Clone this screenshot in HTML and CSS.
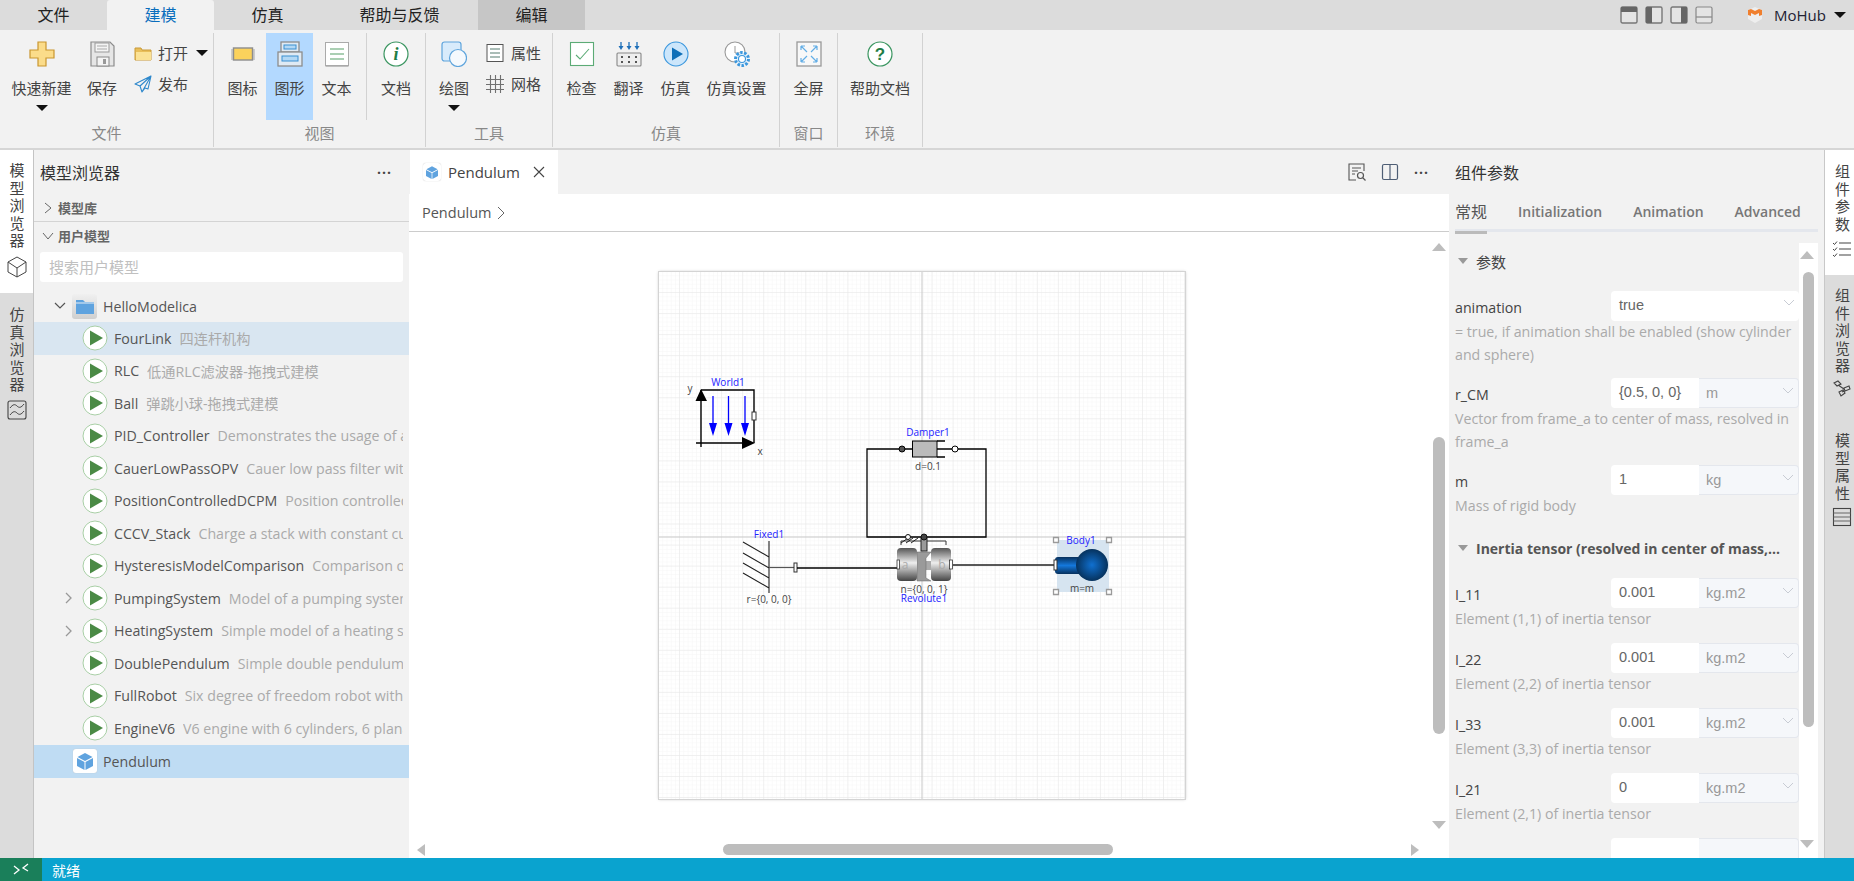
FILE: index.html
```html
<!DOCTYPE html>
<html lang="zh">
<head>
<meta charset="utf-8">
<title>MoHub</title>
<link rel="stylesheet" href="styles.css">
</head>
<body>
<svg class="defs" width="0" height="0" aria-hidden="true">
  <defs>
    <symbol id="play" viewBox="0 0 26 26"><circle cx="13" cy="13" r="12" fill="#fff" stroke="#a9cfa6" stroke-width="1"/><path d="M8 5.5 21 13 8 20.5Z" fill="#4a8a45"/></symbol>
    <linearGradient id="cyl" x1="0" y1="0" x2="0" y2="1"><stop offset="0" stop-color="#555"/><stop offset=".45" stop-color="#eee"/><stop offset="1" stop-color="#444"/></linearGradient>
    <linearGradient id="bodyc" x1="0" y1="0" x2="0" y2="1"><stop offset="0" stop-color="#06305c"/><stop offset=".5" stop-color="#1478dc"/><stop offset="1" stop-color="#06305c"/></linearGradient>
    <radialGradient id="bodys" cx=".5" cy=".5" r=".55"><stop offset="0" stop-color="#1070d0"/><stop offset="1" stop-color="#052c52"/></radialGradient>
    <pattern id="minor" x="659" y="272" width="4.208" height="4.208" patternUnits="userSpaceOnUse"><path d="M4.208 0V4.208H0" fill="none" stroke="#f5f5f5" stroke-width="1"/></pattern>
    <pattern id="major" x="659" y="272" width="21.04" height="21.04" patternUnits="userSpaceOnUse"><path d="M21.04 0V21.04H0" fill="none" stroke="#e6e6e6" stroke-width="1"/></pattern>
  </defs>
</svg>
<div class="app">
  <header class="menubar">
    <nav class="menutabs">
      <div class="menutab">文件</div>
      <div class="menutab active">建模</div>
      <div class="menutab">仿真</div>
      <div class="menutab">帮助与反馈</div>
      <div class="menutab context">编辑</div>
    </nav>
    <div class="menuright">
      <svg class="layout" width="18" height="18" viewBox="0 0 18 18"><rect x="1" y="1" width="16" height="16" rx="1.5" fill="#e4e4e4" stroke="#777" stroke-width="1.4"/><rect x="1" y="1" width="16" height="5" fill="#666"/></svg>
      <svg class="layout" width="18" height="18" viewBox="0 0 18 18"><rect x="1" y="1" width="16" height="16" rx="1.5" fill="#e4e4e4" stroke="#777" stroke-width="1.4"/><rect x="1" y="1" width="6" height="16" fill="#666"/></svg>
      <svg class="layout" width="18" height="18" viewBox="0 0 18 18"><rect x="1" y="1" width="16" height="16" rx="1.5" fill="#e4e4e4" stroke="#777" stroke-width="1.4"/><rect x="11" y="1" width="6" height="16" fill="#666"/></svg>
      <svg class="layout" width="18" height="18" viewBox="0 0 18 18"><rect x="1" y="1" width="16" height="16" rx="1.5" fill="#e4e4e4" stroke="#888" stroke-width="1.2"/><path d="M1 11H17" stroke="#888" stroke-width="1.2"/></svg>
      <svg class="logo" width="16" height="18" viewBox="0 0 16 18"><path d="M1 4 8 1l7 3v9l-7 4-7-4Z" fill="#eee"/><path d="M1 4 4 3 8 5l4-2 3 1v5l-3 1V7L8 9 4 7v3L1 9Z" fill="#f07f2e"/></svg>
      <span class="user">MoHub</span>
      <span class="caret"></span>
    </div>
  </header>

  <section class="ribbon">
    <div class="group g-file">
      <div class="group-body">
        <div class="rbtn w69">
          <svg width="26" height="26" viewBox="0 0 26 26"><path d="M9 1h8v8h8v8h-8v8H9v-8H1V9h8Z" fill="#fbdc8a" stroke="#c9962f" stroke-width="1.2"/></svg>
          <span>快速新建</span><i class="caret"></i>
        </div>
        <div class="rbtn w52">
          <svg width="26" height="26" viewBox="0 0 26 26"><path d="M2 1h19l4 4v20H2Z" fill="#e6e6e6" stroke="#8c8c8c" stroke-width="1.2"/><rect x="6" y="2" width="14" height="9" fill="#f4f4f4" stroke="#999"/><path d="M8 5h10M8 8h10" stroke="#aaa"/><rect x="8" y="16" width="12" height="9" fill="#f4f4f4" stroke="#888"/><rect x="14" y="18" width="3" height="5" fill="#999"/></svg>
          <span>保存</span>
        </div>
        <div class="rcol">
          <div class="rsmall wide">
            <svg width="18" height="18" viewBox="0 0 18 18"><path d="M1 4h6l1 2h9v10H1Z" fill="#e9bf5a" stroke="#c99a38"/><path d="M2 8h15v8H2Z" fill="#fbe295"/></svg>
            <span>打开</span><i class="caret"></i>
          </div>
          <div class="rsmall">
            <svg width="18" height="18" viewBox="0 0 18 18"><path d="M17 1 1 9l5 2 2 6 3-4 3 1ZM17 1 6 11M17 1 8 17" fill="none" stroke="#2e88cc" stroke-width="1.1" stroke-linejoin="round"/></svg>
            <span>发布</span>
          </div>
        </div>
      </div>
      <div class="group-label">文件</div>
    </div>

    <div class="group g-view">
      <div class="group-body">
        <div class="rbtn w47">
          <svg width="26" height="26" viewBox="0 0 26 26"><rect x="1" y="8" width="24" height="11" fill="#ccc"/><rect x="3.5" y="7" width="19" height="12" fill="#fbd25c" stroke="#8d8d8d" stroke-width="1.4"/></svg>
          <span>图标</span>
        </div>
        <div class="rbtn w47 selected">
          <svg width="26" height="26" viewBox="0 0 26 26"><rect x="4" y="1" width="18" height="10" fill="#dfeaf4" stroke="#8d8d8d" stroke-width="1.3"/><rect x="7" y="4" width="12" height="4" fill="#b2d8f5" stroke="#3a8fd0"/><rect x="1" y="11" width="24" height="14" fill="#dfeaf4" stroke="#8d8d8d" stroke-width="1.3"/><rect x="5" y="15" width="16" height="5" fill="#b2d8f5" stroke="#3a8fd0"/></svg>
          <span>图形</span>
        </div>
        <div class="rbtn w47">
          <svg width="26" height="26" viewBox="0 0 26 26"><rect x="1.5" y="1.5" width="23" height="23" fill="#fff" stroke="#aaa"/><path d="M1.5 25H24.500" stroke="#aaa" stroke-width="1.400"/><path d="M6 8h14M6 13h14M6 18h14" stroke="#8fc09a" stroke-width="1.300"/></svg>
          <span>文本</span>
        </div>
        <div class="vsep"></div>
        <div class="rbtn w58">
          <svg width="26" height="26" viewBox="0 0 26 26"><circle cx="13" cy="13" r="12" fill="#fff" stroke="#3a9560" stroke-width="1.200"/><text x="13" y="19" class="info-i">i</text></svg>
          <span>文档</span>
        </div>
      </div>
      <div class="group-label">视图</div>
    </div>

    <div class="group g-tool">
      <div class="group-body">
        <div class="rbtn w50">
          <svg width="26" height="26" viewBox="0 0 26 26"><rect x="1" y="1" width="19" height="19" rx="2.500" fill="#d8ebfb" stroke="#5ea4dc" stroke-width="1.200"/><circle cx="17" cy="17" r="8.500" fill="#f5f9fd" stroke="#5ea4dc" stroke-width="1.200"/></svg>
          <span>绘图</span><i class="caret"></i>
        </div>
        <div class="rcol tight">
          <div class="rsmall">
            <svg width="20" height="20" viewBox="0 0 20 20"><rect x="2" y="1.500" width="16" height="17" fill="#fff" stroke="#555"/><path d="M5 6h10M5 10h10M5 14h10" stroke="#8fa8a0" stroke-width="1.300"/></svg>
            <span>属性</span>
          </div>
          <div class="rsmall">
            <svg width="20" height="20" viewBox="0 0 20 20"><path d="M5.500 1v18M10.500 1v18M15.500 1v18M1 5.500h18M1 10.500h18M1 15.500h18" stroke="#707070" stroke-width="1.100"/></svg>
            <span>网格</span>
          </div>
        </div>
      </div>
      <div class="group-label">工具</div>
    </div>

    <div class="group g-sim">
      <div class="group-body">
        <div class="rbtn w47">
          <svg width="26" height="26" viewBox="0 0 26 26"><rect x="1.500" y="1.500" width="23" height="23" fill="#fff" stroke="#5cab76" stroke-width="1.100"/><path d="M7 14l4 4 9-10" fill="none" stroke="#5cab76" stroke-width="1.100"/></svg>
          <span>检查</span>
        </div>
        <div class="rbtn w47">
          <svg width="26" height="26" viewBox="0 0 26 26"><path d="M5 1v6M13 1v6M21 1v6" stroke="#1e6fb8" stroke-width="1.300"/><path d="M2.500 5h5L5 9ZM10.500 5h5L13 9ZM18.500 5h5L21 9Z" fill="#1e6fb8"/><rect x="1" y="12" width="24" height="13" rx="1" fill="#eee" stroke="#888" stroke-width="1.100"/><path d="M5 16h2M12 16h2M19 16h2M5 21h2M12 21h2M19 21h2" stroke="#555" stroke-width="2"/></svg>
          <span>翻译</span>
        </div>
        <div class="rbtn w47">
          <svg width="26" height="26" viewBox="0 0 26 26"><circle cx="13" cy="13" r="12" fill="#cce6fb" stroke="#3b97dd" stroke-width="1.100"/><path d="M9 6.500 20 13 9 19.500Z" fill="#0e6fb8"/></svg>
          <span>仿真</span>
        </div>
        <div class="rbtn w75">
          <svg width="26" height="26" viewBox="0 0 26 26"><circle cx="11" cy="11" r="10" fill="#fff" stroke="#999" stroke-width="1.100"/><path d="M11 5v7h5" fill="none" stroke="#999"/><circle cx="18" cy="18" r="6.500" fill="#e4f1fb" stroke="#3b97dd" stroke-width="3" stroke-dasharray="2.500 1.500"/><circle cx="18" cy="18" r="3.500" fill="#fff" stroke="#3b97dd" stroke-width="1.100"/></svg>
          <span>仿真设置</span>
        </div>
      </div>
      <div class="group-label">仿真</div>
    </div>

    <div class="group g-win">
      <div class="group-body center">
        <div class="rbtn w50">
          <svg width="26" height="26" viewBox="0 0 26 26"><rect x="1" y="1" width="24" height="24" fill="#f8f8f8" stroke="#999" stroke-width="1.300"/><path d="M5 5l6 6M21 5l-6 6M5 21l6-6M21 21l-6-6M5 5h4M5 5v4M21 5h-4M21 5v4M5 21h4M5 21v-4M21 21h-4M21 21v-4" stroke="#63aee6" stroke-width="1.200" fill="none"/></svg>
          <span>全屏</span>
        </div>
      </div>
      <div class="group-label">窗口</div>
    </div>

    <div class="group g-env">
      <div class="group-body center">
        <div class="rbtn w75">
          <svg width="26" height="26" viewBox="0 0 26 26"><circle cx="13" cy="13" r="12" fill="#fff" stroke="#3a9560" stroke-width="1.200"/><text x="13" y="19" class="info-q">?</text></svg>
          <span>帮助文档</span>
        </div>
      </div>
      <div class="group-label">环境</div>
    </div>
  </section>

  <main class="main">
    <aside class="rail rail-left">
      <div class="railitem active left-a">
        <span class="vtext">模型浏览器</span>
        <svg width="20" height="22" viewBox="0 0 20 22"><path d="M10 1 19 6v10l-9 5-9-5V6ZM1 6l9 6 9-6M10 12v9" fill="none" stroke="#444" stroke-width="1"/></svg>
      </div>
      <div class="railitem left-b">
        <span class="vtext">仿真浏览器</span>
        <svg width="20" height="20" viewBox="0 0 20 20"><rect x="1" y="1" width="18" height="18" rx="2" fill="none" stroke="#444" stroke-width="1.100"/><path d="M3 8c3-4 5-4 7-2s4 2 7-2M3 15c3-4 5-4 7-2s4 2 7-2" fill="none" stroke="#444"/></svg>
      </div>
    </aside>

    <section class="browser">
      <div class="panel-title">
        <span>模型浏览器</span><b class="dots">···</b>
      </div>
      <div class="sec sec-lib"><svg class="chev" width="10" height="12" viewBox="0 0 10 12"><path d="M2 1l6 5-6 5" fill="none" stroke="#666" stroke-width="1"/></svg><span>模型库</span></div>
      <div class="sec"><svg class="chev" width="12" height="10" viewBox="0 0 12 10"><path d="M1 2l5 6 5-6" fill="none" stroke="#666" stroke-width="1"/></svg><span>用户模型</span></div>
      <div class="search">搜索用户模型</div>
      <ul class="tree">
        <li class="node-root">
          <svg class="chev-root" width="12" height="10" viewBox="0 0 12 10"><path d="M1 2l5 5 5-5" fill="none" stroke="#555" stroke-width="1.200"/></svg>
          <span class="foldbox"><svg width="18" height="15" viewBox="0 0 18 15"><path d="M0 1h7l2 2h9v12H0Z" fill="#5fa3df"/><path d="M0 4h18" stroke="#e8eef5"/></svg></span>
          <span class="name">HelloModelica</span>
        </li>
        <li class="row hover"><svg class="playi"><use href="#play"/></svg><span class="name">FourLink</span><span class="desc">四连杆机构</span></li>
        <li class="row"><svg class="playi"><use href="#play"/></svg><span class="name">RLC</span><span class="desc">低通RLC滤波器-拖拽式建模</span></li>
        <li class="row"><svg class="playi"><use href="#play"/></svg><span class="name">Ball</span><span class="desc">弹跳小球-拖拽式建模</span></li>
        <li class="row"><svg class="playi"><use href="#play"/></svg><span class="name">PID_Controller</span><span class="desc">Demonstrates the usage of a Continuous.LimPID controller</span></li>
        <li class="row"><svg class="playi"><use href="#play"/></svg><span class="name">CauerLowPassOPV</span><span class="desc">Cauer low pass filter with operational amplifiers</span></li>
        <li class="row"><svg class="playi"><use href="#play"/></svg><span class="name">PositionControlledDCPM</span><span class="desc">Position controlled DC PM drive</span></li>
        <li class="row"><svg class="playi"><use href="#play"/></svg><span class="name">CCCV_Stack</span><span class="desc">Charge a stack with constant current</span></li>
        <li class="row"><svg class="playi"><use href="#play"/></svg><span class="name">HysteresisModelComparison</span><span class="desc">Comparison of different hysteresis models</span></li>
        <li class="row"><svg class="chev-row" width="8" height="12" viewBox="0 0 8 12"><path d="M1 1l5 5-5 5" fill="none" stroke="#999" stroke-width="1.300"/></svg><svg class="playi"><use href="#play"/></svg><span class="name">PumpingSystem</span><span class="desc">Model of a pumping system for drinking water</span></li>
        <li class="row"><svg class="chev-row" width="8" height="12" viewBox="0 0 8 12"><path d="M1 1l5 5-5 5" fill="none" stroke="#999" stroke-width="1.300"/></svg><svg class="playi"><use href="#play"/></svg><span class="name">HeatingSystem</span><span class="desc">Simple model of a heating system</span></li>
        <li class="row"><svg class="playi"><use href="#play"/></svg><span class="name">DoublePendulum</span><span class="desc">Simple double pendulum with two revolute joints</span></li>
        <li class="row"><svg class="playi"><use href="#play"/></svg><span class="name">FullRobot</span><span class="desc">Six degree of freedom robot with path planning</span></li>
        <li class="row"><svg class="playi"><use href="#play"/></svg><span class="name">EngineV6</span><span class="desc">V6 engine with 6 cylinders, 6 planar loops</span></li>
        <li class="node-model">
          <span class="cubebox"><svg width="16" height="17" viewBox="0 0 16 17"><path d="M8 0 15.500 4 8 8 .5 4Z" fill="#5fa3df"/><path d="M0 5l7.500 4v8L0 13ZM16 5 8.500 9v8L16 13Z" fill="#5fa3df"/></svg></span>
          <span class="name">Pendulum</span>
        </li>
      </ul>
    </section>

    <section class="center-col">
      <div class="doc-tabs">
        <div class="doc-tab">
          <span class="cubebox small"><svg width="12" height="13" viewBox="0 0 16 17"><path d="M8 0 15.500 4 8 8 .5 4Z" fill="#5fa3df"/><path d="M0 5l7.500 4v8L0 13ZM16 5 8.500 9v8L16 13Z" fill="#5fa3df"/></svg></span>
          <span class="doc-name">Pendulum</span>
          <svg class="doc-x" width="12" height="12" viewBox="0 0 12 12"><path d="M1 1l10 10M11 1 1 11" stroke="#444" stroke-width="1.100"/></svg>
        </div>
        <div class="doc-tools">
          <svg width="18" height="18" viewBox="0 0 18 18"><path d="M16 8V1H1v16h7" fill="none" stroke="#555" stroke-width="1.100"/><path d="M4 5h9M4 8h6M4 11h3" stroke="#555"/><circle cx="12.500" cy="12.500" r="3" fill="none" stroke="#555" stroke-width="1.200"/><path d="M15 15l2.500 2.500" stroke="#555" stroke-width="1.300"/></svg>
          <svg width="18" height="18" viewBox="0 0 18 18"><rect x="1.500" y="1.500" width="15" height="15" rx="1.500" fill="none" stroke="#4d5d74" stroke-width="1.200"/><path d="M9 1.500v15" stroke="#4d5d74" stroke-width="1.200"/></svg>
          <b class="dots">···</b>
        </div>
      </div>
      <div class="crumb"><span>Pendulum</span><svg width="8" height="14" viewBox="0 0 8 14"><path d="M1 1l6 6-6 6" fill="none" stroke="#666" stroke-width="1"/></svg></div>
      <div class="canvas">
        <svg class="sheet" width="526" height="527" viewBox="659 272 526 527">
          <rect x="659" y="272" width="526" height="527" fill="#fff"/>
          <rect x="659" y="272" width="526" height="527" fill="url(#minor)"/>
          <rect x="659" y="272" width="526" height="527" fill="url(#major)"/>
          <path d="M922 272V799M659 537H1185" stroke="#c8c8c8" stroke-width="1"/>

          <text class="lbl" x="728" y="386">World1</text>
          <text class="cap" x="690" y="392">y</text>
          <text class="cap" x="760" y="455">x</text>
          <path d="M701 390V447M701 390H754V443M696 443H745" fill="none" stroke="#000" stroke-width="1.400"/>
          <path d="M701 389 695.500 401H707ZM755 443 742 437V449Z" fill="#000"/>
          <rect x="752" y="412" width="4" height="8" fill="#fff" stroke="#333"/>
          <path d="M713 396V425M728.500 396V425M745 396V425" stroke="#0000ff" stroke-width="1.300"/>
          <path d="M709 423H717L713 436ZM724.500 423H732.500L728.500 436ZM741 423H749L745 436Z" fill="#0000ff"/>

          <text class="lbl" x="928" y="436">Damper1</text>
          <text class="cap" x="928" y="470">d=0.1</text>
          <path d="M905 449H867V537H986V449H958M937 449H952M902 449H912M937 441H945M937 457H945" fill="none" stroke="#000" stroke-width="1.300"/>
          <rect x="912.500" y="441" width="24.500" height="16" fill="#bbb" stroke="#000"/>
          <circle cx="902" cy="449" r="3" fill="#555" stroke="#000"/>
          <circle cx="955" cy="449" r="3" fill="#fff" stroke="#000"/>

          <text class="lbl" x="769" y="538">Fixed1</text>
          <path d="M769 541V593M743 542 769 557M743 553 769 568M743 563 769 578M743 573 769 588" fill="none" stroke="#222" stroke-width="1.100"/>
          <path d="M769 567.500H795" stroke="#555" stroke-width="1.200"/>
          <rect x="794" y="563" width="3" height="9" fill="#fff" stroke="#333"/>
          <path d="M797 568H898" stroke="#000" stroke-width="1.400"/>
          <text class="cap" x="769" y="603">r={0, 0, 0}</text>

          <path d="M901 545V541H946V545M917 565H932" fill="none" stroke="#333"/>
          <rect x="916" y="561" width="16" height="9" fill="#aaa"/>
          <path d="M917 552H931L926 558V578L931 581H917Z" fill="#9a9a9a" stroke="#666" stroke-width=".5"/>
          <rect x="897" y="548" width="20" height="33" rx="4" fill="url(#cyl)"/>
          <rect x="931" y="548" width="20" height="33" rx="4" fill="url(#cyl)"/>
          <rect x="897" y="560" width="2.500" height="9" fill="#fff" stroke="#333" stroke-width=".8"/>
          <rect x="949.500" y="560" width="3" height="9" fill="#fff" stroke="#333" stroke-width=".8"/>
          <rect x="921" y="538" width="6" height="13" fill="#9a9a9a" stroke="#222"/>
          <circle cx="924" cy="537" r="3" fill="#444" stroke="#111"/>
          <path d="M901 543 908 538M906 543 913 538M911 543 918 538" stroke="#222"/>
          <circle cx="908" cy="537" r="2.500" fill="#fff" stroke="#111"/>
          <text class="cyl-t" x="905" y="569">a</text>
          <text class="cyl-t" x="942" y="569">b</text>
          <text class="cap" x="924" y="593">n={0, 0, 1}</text>
          <text class="lbl" x="924" y="602">Revolute1</text>
          <path d="M953 565H1055" stroke="#222" stroke-width="1.400"/>

          <rect x="1057" y="540" width="52" height="52" fill="#d6e4f0"/>
          <rect x="1055" y="557" width="28" height="17" rx="3" fill="url(#bodyc)"/>
          <circle cx="1092" cy="565" r="16" fill="url(#bodys)"/>
          <rect x="1054" y="560" width="3" height="10" fill="#fff" stroke="#333"/>
          <text class="lbl" x="1081" y="544">Body1</text>
          <text class="cap" x="1082" y="592">m=m</text>
          <path d="M1053.500 537.500h5v5h-5ZM1106.500 537.500h5v5h-5ZM1053.500 589.500h5v5h-5ZM1106.500 589.500h5v5h-5Z" fill="#fff" stroke="#9a9a9a" stroke-width="1.300"/>
        </svg>
        <i class="tri tri-up v-up"></i>
        <div class="thumb-v"></div>
        <i class="tri tri-down v-down"></i>
        <i class="tri tri-left h-left"></i>
        <div class="thumb-h"></div>
        <i class="tri tri-right h-right"></i>
      </div>
    </section>

    <section class="params">
      <div class="panel-title pt-right"><span>组件参数</span></div>
      <div class="ptabs">
        <span class="ptab active">常规</span>
        <span class="ptab">Initialization</span>
        <span class="ptab">Animation</span>
        <span class="ptab">Advanced</span>
      </div>
      <div class="pbody">
        <div class="form">
          <div class="fhead first"><i class="tri-head"></i><span>参数</span></div>
          <div class="field">
            <div class="frow"><label>animation</label><div class="select full">true<svg class="sel-chev" width="12" height="7" viewBox="0 0 12 7"><path d="M1 1l5 5 5-5" fill="none" stroke="#c8ccd4"/></svg></div></div>
            <p class="fdesc">= true, if animation shall be enabled (show cylinder and sphere)</p>
          </div>
          <div class="field">
            <div class="frow"><label>r_CM</label><div class="input">{0.5, 0, 0}</div><div class="select unit">m<svg class="sel-chev" width="12" height="7" viewBox="0 0 12 7"><path d="M1 1l5 5 5-5" fill="none" stroke="#c8ccd4"/></svg></div></div>
            <p class="fdesc">Vector from frame_a to center of mass, resolved in frame_a</p>
          </div>
          <div class="field">
            <div class="frow"><label>m</label><div class="input">1</div><div class="select unit">kg<svg class="sel-chev" width="12" height="7" viewBox="0 0 12 7"><path d="M1 1l5 5 5-5" fill="none" stroke="#c8ccd4"/></svg></div></div>
            <p class="fdesc">Mass of rigid body</p>
          </div>
          <div class="fhead"><i class="tri-head"></i><strong>Inertia tensor (resolved in center of mass,...</strong></div>
          <div class="field">
            <div class="frow"><label>I_11</label><div class="input">0.001</div><div class="select unit">kg.m2<svg class="sel-chev" width="12" height="7" viewBox="0 0 12 7"><path d="M1 1l5 5 5-5" fill="none" stroke="#c8ccd4"/></svg></div></div>
            <p class="fdesc">Element (1,1) of inertia tensor</p>
          </div>
          <div class="field">
            <div class="frow"><label>I_22</label><div class="input">0.001</div><div class="select unit">kg.m2<svg class="sel-chev" width="12" height="7" viewBox="0 0 12 7"><path d="M1 1l5 5 5-5" fill="none" stroke="#c8ccd4"/></svg></div></div>
            <p class="fdesc">Element (2,2) of inertia tensor</p>
          </div>
          <div class="field">
            <div class="frow"><label>I_33</label><div class="input">0.001</div><div class="select unit">kg.m2<svg class="sel-chev" width="12" height="7" viewBox="0 0 12 7"><path d="M1 1l5 5 5-5" fill="none" stroke="#c8ccd4"/></svg></div></div>
            <p class="fdesc">Element (3,3) of inertia tensor</p>
          </div>
          <div class="field">
            <div class="frow"><label>I_21</label><div class="input">0</div><div class="select unit">kg.m2<svg class="sel-chev" width="12" height="7" viewBox="0 0 12 7"><path d="M1 1l5 5 5-5" fill="none" stroke="#c8ccd4"/></svg></div></div>
            <p class="fdesc">Element (2,1) of inertia tensor</p>
          </div>
          <div class="field">
            <div class="frow"><label></label><div class="input"></div><div class="select unit"></div></div>
          </div>
        </div>
        <div class="pscroll">
          <i class="tri tri-up ps-up"></i>
          <div class="ps-thumb"></div>
          <i class="tri tri-down ps-down"></i>
        </div>
      </div>
    </section>

    <aside class="rail rail-right">
      <div class="railitem active right-a">
        <span class="vtext">组件参数</span>
        <svg width="20" height="18" viewBox="0 0 20 18"><path d="M7 3h12M7 9h12M7 15h12" stroke="#444" stroke-width="1.100"/><path d="M1 3l1.500 1.500L5 1.500M1 9l1.500 1.500L5 7.500M1 15l1.500 1.500L5 13.500" fill="none" stroke="#444"/></svg>
      </div>
      <div class="railitem right-b">
        <span class="vtext">组件浏览器</span>
        <svg width="20" height="20" viewBox="0 0 20 20"><path d="M2 4l4-2 3 3-4 2ZM12 9l5-2 1 3-5 2ZM7 13l4-2 2 3-4 3ZM6 6l6 4M12 12l-2 1" fill="none" stroke="#444" stroke-width="1.100"/></svg>
      </div>
      <div class="railitem right-c">
        <span class="vtext">模型属性</span>
        <svg width="20" height="20" viewBox="0 0 20 20"><rect x="1.500" y="1.500" width="17" height="17" fill="none" stroke="#444" stroke-width="1.100"/><path d="M1.500 6h17M1.500 10h17M1.500 14h17" stroke="#666"/></svg>
      </div>
    </aside>
  </main>

  <footer class="status">
    <div class="status-ico"><svg width="16" height="14" viewBox="0 0 16 14"><path d="M1 3l5 4-5 4M15 1 10 5l5 3" fill="none" stroke="#fff" stroke-width="1.300"/></svg></div>
    <span>就绪</span>
  </footer>
</div>
</body>
</html>
```

FILE: styles.css
```css
* { box-sizing: border-box; }
html, body { margin: 0; height: 100%; overflow: hidden; }
body {
  font-family: "Open Sans", "Noto Sans CJK SC", sans-serif;
  font-size: 14px;
  color: #333;
  background: #f2f2f2;
}
.defs { position: absolute; }
.app { display: flex; flex-direction: column; width: 1854px; height: 881px; }

/* menu bar */
.menubar { display: flex; justify-content: space-between; height: 30px; background: #dcdcdc; flex: none; }
.menutabs { display: flex; }
.menutab { width: 107px; height: 30px; line-height: 30px; text-align: center; font-size: 16px; color: #222; }
.menutab:nth-child(4) { width: 157px; }
.menutab.active { background: #f2f2f2; color: #0a6ebd; border-radius: 3px 3px 0 0; }
.menutab.context { background: #c6c6c6; }
.menuright { display: flex; align-items: center; padding-right: 8px; }
.layout { margin-right: 7px; }
.logo { margin-left: 27px; }
.user { margin-left: 11px; margin-right: 8px; font-size: 15px; color: #223; }
.caret { display: block; width: 0; height: 0; border-left: 6px solid transparent; border-right: 6px solid transparent; border-top: 6px solid #111; }

/* ribbon */
.ribbon { display: flex; height: 120px; flex: none; padding-top: 3px; background: #f2f2f2; border-bottom: 2px solid #d6d6d6; }
.group { height: 114px; border-right: 1px solid #d2d2d2; display: flex; flex-direction: column; }
.group-body { height: 87px; display: flex; }
.group-body.center { justify-content: center; }
.group-label { height: 27px; line-height: 26px; text-align: center; font-size: 15px; color: #888; }
.g-file { width: 214px; padding-left: 7px; }
.g-file .group-body { flex: 1; }
.g-file .group-label { margin-left: -7px; }
.g-view { width: 212px; padding-left: 5px; }
.g-view .group-label { margin-left: -5px; }
.g-tool { width: 127px; padding-left: 3px; }
.g-tool .group-label { margin-left: -3px; }
.g-sim { width: 227px; padding-left: 5px; }
.g-sim .group-label { margin-left: -5px; }
.g-win { width: 58px; }
.g-env { width: 85px; }
.rbtn { display: flex; flex-direction: column; align-items: center; padding-top: 8px; font-size: 15px; color: #444; flex: none; }
.rbtn svg { display: block; }
.rbtn span { margin-top: 11px; line-height: 20px; white-space: nowrap; }
.rbtn .caret { margin-top: 7px; }
.rbtn.selected { background: #b3d9ff; }
.w47 { width: 47px; } .w50 { width: 50px; } .w52 { width: 52px; } .w58 { width: 58px; } .w69 { width: 69px; } .w75 { width: 75px; }
.rcol { display: flex; flex-direction: column; margin-left: 6px; padding-top: 4px; }
.rcol.tight { margin-left: 6px; }
.rsmall { display: flex; align-items: center; height: 31px; font-size: 15px; color: #444; white-space: nowrap; }
.rsmall svg { margin-right: 6px; flex: none; }
.rsmall .caret { margin-left: 8px; }
.vsep { width: 1px; height: 87px; margin-left: 6px; background: #d2d2d2; flex: none; }
.info-i { font-family: "Liberation Serif", serif; font-style: italic; font-weight: 700; font-size: 18px; fill: #1f7d46; text-anchor: middle; }
.info-q { font-family: "Liberation Sans", sans-serif; font-weight: 700; font-size: 17px; fill: #1f7d46; text-anchor: middle; }

/* main */
.main { display: flex; flex: 1; min-height: 0; }
.rail { flex: none; background: #dcdcdc; display: flex; flex-direction: column; align-items: center; }
.rail-left { width: 34px; border-right: 1px solid #c4c4c4; }
.rail-right { width: 30px; border-left: 1px solid #c8c8c8; padding-left: 5px; align-items: stretch; }
.railitem { display: flex; flex-direction: column; align-items: center; width: 100%; }
.railitem.active { background: #fff; }
.vtext { writing-mode: vertical-rl; text-orientation: upright; font-size: 15px; line-height: 18px; letter-spacing: 2.5px; color: #444; white-space: nowrap; }
.left-a { height: 143px; padding-top: 13px; }
.left-a svg { margin-top: 5px; }
.left-b { padding-top: 14px; }
.left-b svg { margin-top: 5px; }
.rail-right .railitem.active { margin-left: -5px; padding-left: 5px; width: calc(100% + 5px); }
.right-a { height: 125px; padding-top: 14px; }
.right-a svg { margin-top: 6px; }
.right-b { padding-top: 13px; height: 145px; }
.right-b svg { margin-top: 3px; }
.right-c { padding-top: 13px; }
.right-c svg { margin-top: 4px; }

/* browser */
.browser { width: 375px; flex: none; background: #f2f2f2; display: flex; flex-direction: column; overflow: hidden; }
.panel-title { display: flex; justify-content: space-between; align-items: center; height: 44px; flex: none; padding: 0 17px 0 6px; font-size: 16px; color: #333; }
.dots { font-weight: 700; color: #444; letter-spacing: 1px; font-size: 14px; }
.sec { display: flex; align-items: center; height: 27px; flex: none; padding-left: 7px; font-size: 13px; font-weight: 700; color: #666; }
.sec span { margin-left: 4px; }
.sec .chev { margin-left: 1px; width: 12px; }
.sec-lib { border-bottom: 1px solid #d4d4d4; height: 28px; }
.search { flex: none; height: 30px; line-height: 30px; margin: 3px 6px 8px; padding-left: 9px; background: #fff; border-radius: 3px; font-size: 15px; color: #c0c0c0; }
.tree { list-style: none; margin: 0; padding: 0; flex: 1; min-height: 0; }
.tree li { display: flex; align-items: center; white-space: nowrap; overflow: hidden; font-size: 14.200px; }
.node-root { height: 32px; padding-left: 20px; }
.chev-root { flex: none; margin-right: 6px; }
.foldbox { flex: none; display: flex; align-items: center; justify-content: center; width: 25px; height: 25px; margin-right: 6px; background: linear-gradient(#f0f0f0, #cfcfcf); border-radius: 3px; }
.row { position: relative; height: 32.500px; padding-left: 48px; padding-right: 6px; }
.row.hover { background: #d9e6f1; }
.playi { width: 26px; height: 26px; flex: none; margin-right: 6px; }
.chev-row { position: absolute; left: 31px; top: 10px; }
.name { color: #555; flex: none; }
.desc { color: #aaa; margin-left: 8px; overflow: hidden; }
.node-model { height: 33px; padding-left: 39px; background: #bfdcf3; }
.cubebox { flex: none; display: flex; align-items: center; justify-content: center; width: 24px; height: 24px; margin-right: 6px; background: #fff; border-radius: 3px; box-shadow: 0 0 1px #bbb; }
.cubebox.small { width: 18px; height: 18px; margin-right: 7px; }

/* centre */
.center-col { flex: 1; min-width: 0; display: flex; flex-direction: column; background: #fff; }
.doc-tabs { display: flex; justify-content: space-between; height: 44px; flex: none; background: #f2f2f2; }
.doc-tab { display: flex; align-items: center; width: 148px; margin-left: 1px; padding-left: 13px; background: #fff; font-size: 15px; color: #444; }
.doc-name { flex: none; }
.doc-x { margin-left: 13px; flex: none; }
.doc-tools { display: flex; align-items: center; gap: 15px; padding-right: 20px; color: #444; }
.crumb { display: flex; align-items: center; gap: 5px; height: 38px; flex: none; padding-left: 13px; border-bottom: 1px solid #ccc; font-size: 14.500px; color: #555; }
.canvas { position: relative; flex: 1; min-height: 0; padding: 40px 0 0 250px; }
.sheet { display: block; box-shadow: 0 0 3px #aaa; outline: 1px solid #d4d4d4; }
.sheet text { font-family: "Open Sans", sans-serif; text-anchor: middle; font-size: 10px; }
.sheet .lbl { fill: #2222ff; }
.sheet .cap { fill: #444; }
.sheet .cyl-t { fill: #aaa; font-size: 12px; }
.tri { position: absolute; display: block; width: 0; height: 0; }
.tri-up { border-left: 7px solid transparent; border-right: 7px solid transparent; border-bottom: 8px solid #bdbdbd; }
.tri-down { border-left: 7px solid transparent; border-right: 7px solid transparent; border-top: 8px solid #bdbdbd; }
.tri-left { border-top: 6px solid transparent; border-bottom: 6px solid transparent; border-right: 8px solid #bdbdbd; }
.tri-right { border-top: 6px solid transparent; border-bottom: 6px solid transparent; border-left: 8px solid #bdbdbd; }
.v-up { left: 1023px; top: 11px; }
.v-down { left: 1023px; top: 589px; }
.h-left { left: 8px; top: 612px; }
.h-right { left: 1002px; top: 612px; }
.thumb-v { position: absolute; left: 1024px; top: 205px; width: 12px; height: 297px; border-radius: 6px; background: #bdbdbd; }
.thumb-h { position: absolute; left: 314px; top: 612px; width: 390px; height: 11px; border-radius: 6px; background: #bdbdbd; }

/* params */
.params { width: 375px; flex: none; display: flex; flex-direction: column; background: #f2f2f2; overflow: hidden; }
.pt-right { padding-left: 6px; }
.ptabs { display: flex; height: 38px; flex: none; margin: 0 6px 0 6px; width: 363px; border-bottom: 3px solid #e4e7ed; position: relative; gap: 31px; align-items: center; font-weight: 600; font-size: 14px; color: #777; }
.ptab.active { font-weight: 400; font-size: 16px; color: #555; position: relative; height: 38px; line-height: 38px; }
.ptab.active::after { content: ""; position: absolute; left: 0; right: 0; bottom: -3px; height: 3px; background: #bbb; }
.pbody { display: flex; flex: 1; min-height: 0; }
.form { width: 350px; flex: none; padding-left: 6px; overflow: hidden; }
.fhead { display: flex; align-items: center; height: 30px; margin-top: 15px; margin-bottom: 15px; font-size: 15px; color: #444; }
.fhead.first { margin-top: 14px; }
.fhead strong { font-size: 14px; font-weight: 700; color: #555; white-space: nowrap; }
.tri-head { flex: none; width: 0; height: 0; margin: 0 8px 0 3px; border-left: 5px solid transparent; border-right: 5px solid transparent; border-top: 6px solid #999; }
.field { margin-bottom: 12px; }
.frow { display: flex; height: 30px; align-items: center; }
.frow label { width: 156px; flex: none; padding-top: 2px; font-size: 14.200px; color: #444; }
.input { width: 88px; height: 30px; line-height: 29px; padding-left: 8px; background: #fff; border-radius: 4px 0 0 4px; font-family: "Liberation Sans", sans-serif; font-size: 14.500px; color: #666; }
.select { position: relative; height: 30px; line-height: 29px; padding-left: 7px; font-family: "Liberation Sans", sans-serif; font-size: 14.500px; color: #666; border-radius: 4px; }
.select.full { width: 188px; background: #fff; padding-left: 8px; }
.select.unit { width: 100px; background: #f5f7fa; border: 1px solid #e4e7ed; border-left: 0; border-radius: 0 4px 4px 0; color: #999; }
.sel-chev { position: absolute; right: 4px; top: 8px; }
.fdesc { margin: 0; min-height: 23px; line-height: 22.500px; font-size: 14.200px; color: #aaa; padding-right: 6px; }

.pscroll { position: relative; width: 19px; flex: none; margin-top: 11px; background: #fff; }
.ps-up { left: 1px; top: 8px; }
.ps-down { left: 1px; top: 597px; }
.ps-thumb { position: absolute; left: 4px; top: 29px; width: 11px; height: 455px; border-radius: 6px; background: #bdbdbd; }

/* status */
.status { display: flex; align-items: center; height: 23px; flex: none; background: #0aa3cf; color: #fff; font-size: 14px; }
.status-ico { display: flex; align-items: center; justify-content: center; width: 42px; height: 23px; margin-right: 10px; background: #1a7f5a; }
```
